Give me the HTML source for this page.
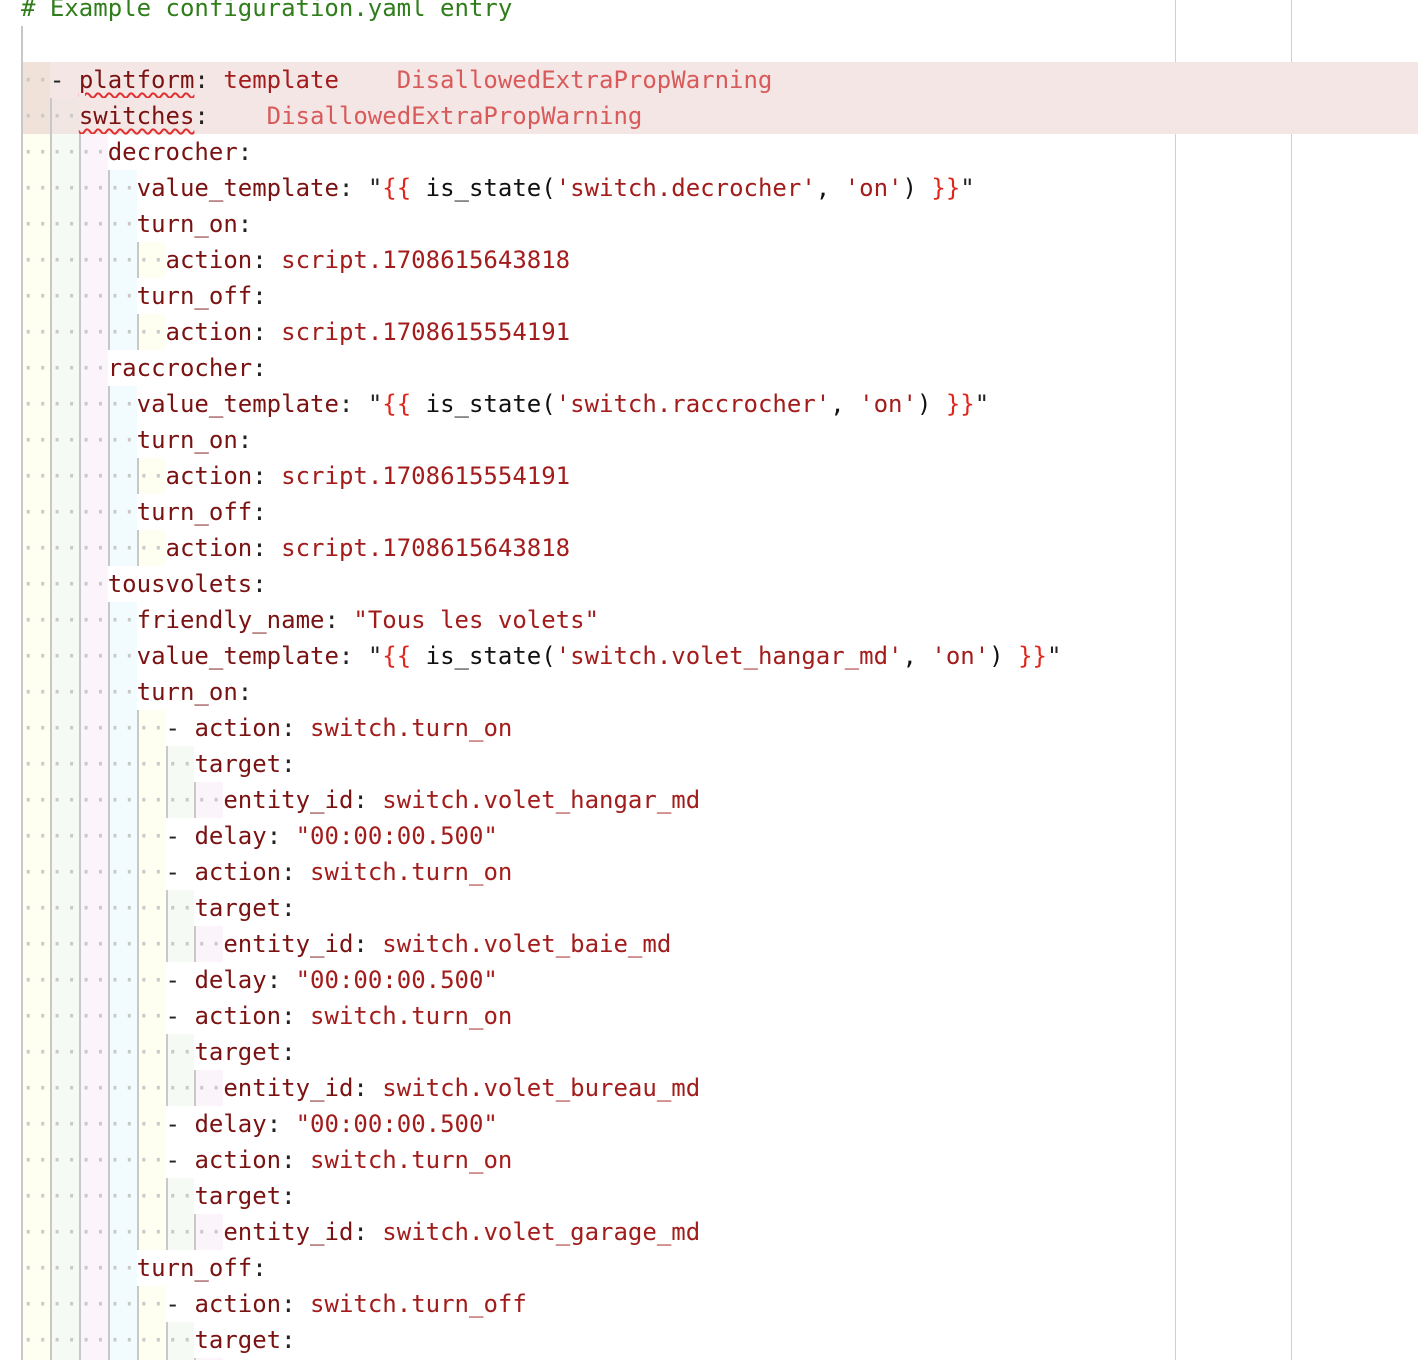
<!DOCTYPE html>
<html><head><meta charset="utf-8"><style>
html,body{margin:0;padding:0;background:#fff;width:1418px;height:1360px;overflow:hidden;position:relative}
.code{position:absolute;left:21px;top:-10px;font-family:"DejaVu Sans Mono","Liberation Mono",monospace;font-size:24px}
.l{height:36px;line-height:36px;position:relative;white-space:pre}
.u{color:#c9c9c9;box-shadow:inset 2px 0 #c8c8c8;display:inline-block;height:36px;vertical-align:top}
.c0{background:#fefef1}.c1{background:#f5fbf4}.c2{background:#fbf4fb}.c3{background:#f2fbfd}
.hl{background:#f5e6e6;margin-right:-1418px}
.k{color:#7a1212}.v{color:#a31c1c}.p{color:#222}.b{color:#e0261c}.t{color:#111}.w{color:#d85a5a}
.cm{color:#2f7d1b}
.sq{text-decoration:underline wavy #e03030;text-underline-offset:4px;text-decoration-thickness:1.5px}
.g{position:absolute;top:0;width:1px;height:1360px;background:#cfcfcf}
</style></head><body>
<div class="g" style="left:1175px"></div>
<div class="g" style="left:1291px"></div>
<div class="code">
<div class="l cm"># Example configuration.yaml entry</div>
<div class="l"><span class="u" style="width:2px"></span></div>
<div class="l hl"><span class="u" style="background:#f0e2d9">··</span><span class="p">- </span><span class="k sq">platform</span><span class="p">: </span><span class="v">template</span>    <span class="w">DisallowedExtraPropWarning</span></div>
<div class="l hl"><span class="u" style="background:#f0e2d9">··</span><span class="u" style="background:#f2e6e2">··</span><span class="k sq">switches</span><span class="p">:</span>    <span class="w">DisallowedExtraPropWarning</span></div>
<div class="l"><span class="u c0">··</span><span class="u c1">··</span><span class="u c2">··</span><span class="k">decrocher</span><span class="p">:</span></div>
<div class="l"><span class="u c0">··</span><span class="u c1">··</span><span class="u c2">··</span><span class="u c3">··</span><span class="k">value_template</span><span class="p">: "</span><span class="b">{{</span><span class="t"> is_state(</span><span class="v">'switch.decrocher'</span><span class="t">, </span><span class="v">'on'</span><span class="t">) </span><span class="b">}}</span><span class="p">"</span></div>
<div class="l"><span class="u c0">··</span><span class="u c1">··</span><span class="u c2">··</span><span class="u c3">··</span><span class="k">turn_on</span><span class="p">:</span></div>
<div class="l"><span class="u c0">··</span><span class="u c1">··</span><span class="u c2">··</span><span class="u c3">··</span><span class="u c0">··</span><span class="k">action</span><span class="p">: </span><span class="v">script.1708615643818</span></div>
<div class="l"><span class="u c0">··</span><span class="u c1">··</span><span class="u c2">··</span><span class="u c3">··</span><span class="k">turn_off</span><span class="p">:</span></div>
<div class="l"><span class="u c0">··</span><span class="u c1">··</span><span class="u c2">··</span><span class="u c3">··</span><span class="u c0">··</span><span class="k">action</span><span class="p">: </span><span class="v">script.1708615554191</span></div>
<div class="l"><span class="u c0">··</span><span class="u c1">··</span><span class="u c2">··</span><span class="k">raccrocher</span><span class="p">:</span></div>
<div class="l"><span class="u c0">··</span><span class="u c1">··</span><span class="u c2">··</span><span class="u c3">··</span><span class="k">value_template</span><span class="p">: "</span><span class="b">{{</span><span class="t"> is_state(</span><span class="v">'switch.raccrocher'</span><span class="t">, </span><span class="v">'on'</span><span class="t">) </span><span class="b">}}</span><span class="p">"</span></div>
<div class="l"><span class="u c0">··</span><span class="u c1">··</span><span class="u c2">··</span><span class="u c3">··</span><span class="k">turn_on</span><span class="p">:</span></div>
<div class="l"><span class="u c0">··</span><span class="u c1">··</span><span class="u c2">··</span><span class="u c3">··</span><span class="u c0">··</span><span class="k">action</span><span class="p">: </span><span class="v">script.1708615554191</span></div>
<div class="l"><span class="u c0">··</span><span class="u c1">··</span><span class="u c2">··</span><span class="u c3">··</span><span class="k">turn_off</span><span class="p">:</span></div>
<div class="l"><span class="u c0">··</span><span class="u c1">··</span><span class="u c2">··</span><span class="u c3">··</span><span class="u c0">··</span><span class="k">action</span><span class="p">: </span><span class="v">script.1708615643818</span></div>
<div class="l"><span class="u c0">··</span><span class="u c1">··</span><span class="u c2">··</span><span class="k">tousvolets</span><span class="p">:</span></div>
<div class="l"><span class="u c0">··</span><span class="u c1">··</span><span class="u c2">··</span><span class="u c3">··</span><span class="k">friendly_name</span><span class="p">: </span><span class="v">"Tous les volets"</span></div>
<div class="l"><span class="u c0">··</span><span class="u c1">··</span><span class="u c2">··</span><span class="u c3">··</span><span class="k">value_template</span><span class="p">: "</span><span class="b">{{</span><span class="t"> is_state(</span><span class="v">'switch.volet_hangar_md'</span><span class="t">, </span><span class="v">'on'</span><span class="t">) </span><span class="b">}}</span><span class="p">"</span></div>
<div class="l"><span class="u c0">··</span><span class="u c1">··</span><span class="u c2">··</span><span class="u c3">··</span><span class="k">turn_on</span><span class="p">:</span></div>
<div class="l"><span class="u c0">··</span><span class="u c1">··</span><span class="u c2">··</span><span class="u c3">··</span><span class="u c0">··</span><span class="p">- </span><span class="k">action</span><span class="p">: </span><span class="v">switch.turn_on</span></div>
<div class="l"><span class="u c0">··</span><span class="u c1">··</span><span class="u c2">··</span><span class="u c3">··</span><span class="u c0">··</span><span class="u c1">··</span><span class="k">target</span><span class="p">:</span></div>
<div class="l"><span class="u c0">··</span><span class="u c1">··</span><span class="u c2">··</span><span class="u c3">··</span><span class="u c0">··</span><span class="u c1">··</span><span class="u c2">··</span><span class="k">entity_id</span><span class="p">: </span><span class="v">switch.volet_hangar_md</span></div>
<div class="l"><span class="u c0">··</span><span class="u c1">··</span><span class="u c2">··</span><span class="u c3">··</span><span class="u c0">··</span><span class="p">- </span><span class="k">delay</span><span class="p">: </span><span class="v">"00:00:00.500"</span></div>
<div class="l"><span class="u c0">··</span><span class="u c1">··</span><span class="u c2">··</span><span class="u c3">··</span><span class="u c0">··</span><span class="p">- </span><span class="k">action</span><span class="p">: </span><span class="v">switch.turn_on</span></div>
<div class="l"><span class="u c0">··</span><span class="u c1">··</span><span class="u c2">··</span><span class="u c3">··</span><span class="u c0">··</span><span class="u c1">··</span><span class="k">target</span><span class="p">:</span></div>
<div class="l"><span class="u c0">··</span><span class="u c1">··</span><span class="u c2">··</span><span class="u c3">··</span><span class="u c0">··</span><span class="u c1">··</span><span class="u c2">··</span><span class="k">entity_id</span><span class="p">: </span><span class="v">switch.volet_baie_md</span></div>
<div class="l"><span class="u c0">··</span><span class="u c1">··</span><span class="u c2">··</span><span class="u c3">··</span><span class="u c0">··</span><span class="p">- </span><span class="k">delay</span><span class="p">: </span><span class="v">"00:00:00.500"</span></div>
<div class="l"><span class="u c0">··</span><span class="u c1">··</span><span class="u c2">··</span><span class="u c3">··</span><span class="u c0">··</span><span class="p">- </span><span class="k">action</span><span class="p">: </span><span class="v">switch.turn_on</span></div>
<div class="l"><span class="u c0">··</span><span class="u c1">··</span><span class="u c2">··</span><span class="u c3">··</span><span class="u c0">··</span><span class="u c1">··</span><span class="k">target</span><span class="p">:</span></div>
<div class="l"><span class="u c0">··</span><span class="u c1">··</span><span class="u c2">··</span><span class="u c3">··</span><span class="u c0">··</span><span class="u c1">··</span><span class="u c2">··</span><span class="k">entity_id</span><span class="p">: </span><span class="v">switch.volet_bureau_md</span></div>
<div class="l"><span class="u c0">··</span><span class="u c1">··</span><span class="u c2">··</span><span class="u c3">··</span><span class="u c0">··</span><span class="p">- </span><span class="k">delay</span><span class="p">: </span><span class="v">"00:00:00.500"</span></div>
<div class="l"><span class="u c0">··</span><span class="u c1">··</span><span class="u c2">··</span><span class="u c3">··</span><span class="u c0">··</span><span class="p">- </span><span class="k">action</span><span class="p">: </span><span class="v">switch.turn_on</span></div>
<div class="l"><span class="u c0">··</span><span class="u c1">··</span><span class="u c2">··</span><span class="u c3">··</span><span class="u c0">··</span><span class="u c1">··</span><span class="k">target</span><span class="p">:</span></div>
<div class="l"><span class="u c0">··</span><span class="u c1">··</span><span class="u c2">··</span><span class="u c3">··</span><span class="u c0">··</span><span class="u c1">··</span><span class="u c2">··</span><span class="k">entity_id</span><span class="p">: </span><span class="v">switch.volet_garage_md</span></div>
<div class="l"><span class="u c0">··</span><span class="u c1">··</span><span class="u c2">··</span><span class="u c3">··</span><span class="k">turn_off</span><span class="p">:</span></div>
<div class="l"><span class="u c0">··</span><span class="u c1">··</span><span class="u c2">··</span><span class="u c3">··</span><span class="u c0">··</span><span class="p">- </span><span class="k">action</span><span class="p">: </span><span class="v">switch.turn_off</span></div>
<div class="l"><span class="u c0">··</span><span class="u c1">··</span><span class="u c2">··</span><span class="u c3">··</span><span class="u c0">··</span><span class="u c1">··</span><span class="k">target</span><span class="p">:</span></div>
<div class="l"><span class="u c0">··</span><span class="u c1">··</span><span class="u c2">··</span><span class="u c3">··</span><span class="u c0">··</span><span class="u c1">··</span><span class="u c2">··</span></div>
</div>
</body></html>
